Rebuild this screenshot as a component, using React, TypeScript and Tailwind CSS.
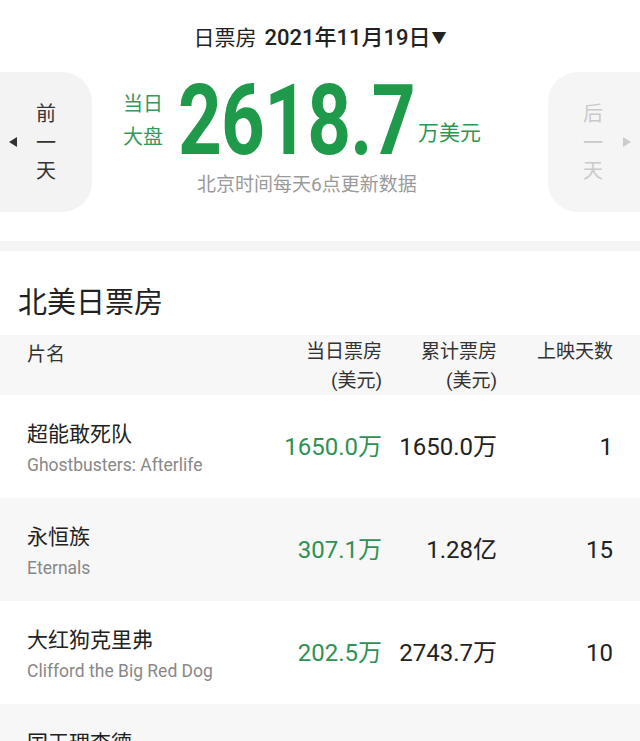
const rows = [
  { cn: '超能敢死队', en: 'Ghostbusters: Afterlife', day: '1650.0万', total: '1650.0万', days: '1' },
  { cn: '永恒族', en: 'Eternals', day: '307.1万', total: '1.28亿', days: '15' },
  { cn: '大红狗克里弗', en: 'Clifford the Big Red Dog', day: '202.5万', total: '2743.7万', days: '10' },
  { cn: '国王理查德', en: 'King Richard', day: '182.0万', total: '182.0万', days: '1' },
];

function LeftArrow({ color }: { color: string }) {
  return (
    <svg width="8" height="10" viewBox="0 0 8 10">
      <polygon points="8,0 8,10 0,5" fill={color} />
    </svg>
  );
}

function RightArrow({ color }: { color: string }) {
  return (
    <svg width="8" height="10" viewBox="0 0 8 10">
      <polygon points="0,0 0,10 8,5" fill={color} />
    </svg>
  );
}

export default function App() {
  return (
    <div className="w-[640px] h-[741px] overflow-hidden bg-white text-[#222] font-['Roboto','Noto_Sans_CJK_SC',sans-serif]">
      {/* date selector */}
      <div className="h-[72px] pt-[4px] flex items-center justify-center leading-[28px] whitespace-nowrap">
        <span className="text-[21px]">日票房</span>
        <span className="ml-[8px] text-[22px] font-medium">2021年11月19日</span>
        <span className="ml-[1px] text-[15px]">▼</span>
      </div>

      {/* day total */}
      <div className="h-[140px] flex">
        <div className="w-[92px] shrink-0 bg-[#f3f3f3] rounded-r-[30px] flex items-center pl-[9px]">
          <LeftArrow color="#333" />
          <div className="ml-[19px] mt-[2px] flex flex-col text-[20px] leading-[28.5px] text-[#333]">
            <span>前</span>
            <span>一</span>
            <span>天</span>
          </div>
        </div>

        <div className="flex-1 min-w-0 flex flex-col pt-[3px] whitespace-nowrap">
          <div className="h-[92px] flex items-center pl-[31px]">
            <div className="shrink-0 flex flex-col text-[20px] leading-[33px] text-[#35995a]">
              <span>当日</span>
              <span>大盘</span>
            </div>
            <div className="ml-[15px] w-[240px] shrink-0 text-[98px] leading-[92px] font-bold text-[#1f9a4b]">
              <span className="inline-block origin-left scale-x-[0.78] tracking-[-1px]">2618.7</span>
            </div>
            <span className="shrink-0 self-end mb-[20px] text-[21px] leading-[28px] text-[#2c9752]">万美元</span>
          </div>
          <div className="mt-[6px] pl-[105px] text-[19px] leading-[24px] text-[#9a9a9a]">北京时间每天6点更新数据</div>
        </div>

        <div className="w-[92px] shrink-0 bg-[#f5f5f5] rounded-l-[30px] flex items-center pl-[35px]">
          <div className="mt-[2px] flex flex-col text-[20px] leading-[28.5px] text-[#cacaca]">
            <span>后</span>
            <span>一</span>
            <span>天</span>
          </div>
          <div className="ml-[20px]">
            <RightArrow color="#cccccc" />
          </div>
        </div>
      </div>

      <div className="mt-[29px] h-[10px] bg-[#f5f5f5]" />

      {/* table */}
      <div className="pl-[18px] pt-[37px] pb-[17px] text-[29px] leading-[30px] text-[#222]">北美日票房</div>

      <div className="h-[60px] bg-[#f7f7f7] grid grid-cols-[1fr_115px_115px_116px] px-[27px] text-[19px] leading-[29px] text-[#333] whitespace-nowrap">
        <div className="pt-[5px]">片名</div>
        <div className="pt-[2px] text-right">
          <div>当日票房</div>
          <div>(美元)</div>
        </div>
        <div className="pt-[2px] text-right">
          <div>累计票房</div>
          <div>(美元)</div>
        </div>
        <div className="pt-[2px] text-right">上映天数</div>
      </div>

      {rows.map((r, i) => (
        <div
          key={r.cn}
          className={`h-[103px] grid grid-cols-[1fr_115px_115px_116px] items-center px-[27px] whitespace-nowrap ${i % 2 === 1 ? 'bg-[#f7f7f7]' : 'bg-white'}`}
        >
          <div className="mt-[7px] flex flex-col">
            <span className="text-[21px] leading-[31px] text-[#222]">{r.cn}</span>
            <span className="text-[17.5px] leading-[31px] text-[#888]">{r.en}</span>
          </div>
          <div className="text-right text-[24px] text-[#2f9153]">{r.day}</div>
          <div className="text-right text-[24px] text-[#222]">{r.total}</div>
          <div className="text-right text-[24px] text-[#222]">{r.days}</div>
        </div>
      ))}
    </div>
  );
}
